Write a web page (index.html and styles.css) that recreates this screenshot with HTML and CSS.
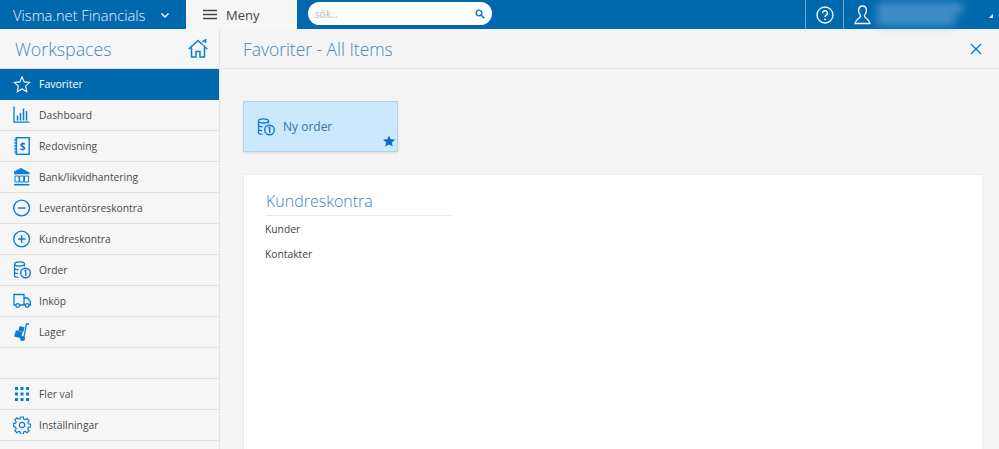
FILE: index.html
```html
<!DOCTYPE html>
<html lang="sv">
<head>
<meta charset="utf-8">
<title>Visma.net Financials</title>
<link rel="stylesheet" href="styles.css">
</head>
<body>
<header class="topbar">
  <div class="brand"><span>Visma.net Financials</span>
    <svg class="chev" width="10" height="7" viewBox="0 0 10 7"><path d="M1.500 1.500 5 5l3.500-3.500" fill="none" stroke="#fff" stroke-width="1.500"/></svg>
  </div>
  <div class="menu-tab">
    <svg width="14" height="11" viewBox="0 0 14 11"><path d="M0 1.500h14M0 5.500h14M0 9.500h14" stroke="#444" stroke-width="1.500"/></svg>
    <span>Meny</span>
  </div>
  <div class="search"><span class="ph">sök...</span>
    <svg width="10" height="10" viewBox="0 0 10 10"><circle cx="4" cy="4" r="2.900" fill="none" stroke="#0a74c4" stroke-width="1.400"/><path d="M6 6l3.300 3.300" stroke="#0a74c4" stroke-width="1.600"/></svg>
  </div>
  <div class="spacer"></div>
  <div class="help">
    <svg width="18" height="18" viewBox="0 0 18 18"><circle cx="9" cy="9" r="8" fill="none" stroke="#fff" stroke-width="1.300"/><path d="M6.600 7.200a2.400 2.400 0 1 1 3.600 2c-.8.500-1.200.9-1.200 1.800" fill="none" stroke="#fff" stroke-width="1.400"/><circle cx="9" cy="13.300" r=".9" fill="#fff"/></svg>
  </div>
  <div class="user">
    <svg width="17" height="20" viewBox="0 0 17 20"><path d="M8.500 1C5.900 1 4.600 3 4.600 5.500c0 2 .7 3.600 1.800 4.600v1.800C5 13.500 1.500 14.600 1 18.500h15c-.5-3.900-4-5-5.400-6.600v-1.800c1.100-1 1.800-2.600 1.800-4.600C12.400 3 11.100 1 8.500 1z" fill="none" stroke="#fff" stroke-width="1.300"/></svg>
    <div class="blur"><i class="b1"></i><i class="b2"></i></div>
    <svg class="corner" width="4" height="4" viewBox="0 0 4 4"><path d="M0 4 4 0v4z" fill="#fff"/></svg>
  </div>
</header>
<div class="body">
  <aside class="sidebar">
    <div class="ws-head"><span>Workspaces</span>
      <svg width="20" height="19" viewBox="0 0 20 19"><path d="M.8 10 10 1.500l4.700 4.300M19.200 10l-4-3.700M3.500 8.500V18h4.500v-5.500h4V18h4.500V8.500M14.500 2.800 17.500 .8V4" fill="none" stroke="#0a7dd1" stroke-width="1.500"/></svg>
    </div>
    <nav>
      <a class="row active"><span class="ico"><svg width="19" height="19" viewBox="0 0 20 20"><path d="M10 1.500l2.500 5.600 6 .7-4.500 4.100 1.300 6L10 14.900l-5.300 3 1.300-6L1.500 7.800l6-.7z" fill="none" stroke="#fff" stroke-width="1.200"/></svg></span>Favoriter</a>
      <a class="row"><span class="ico"><svg width="18" height="18" viewBox="0 0 18 18"><path d="M1 .5v15.700h15.500" fill="none" stroke="#0a7dd1" stroke-width="1.300"/><path d="M4.500 14.500V9.500M7.500 14.500V7M10.500 14.500V2.500M13.500 14.500V5" stroke="#0a7dd1" stroke-width="1.500"/></svg></span>Dashboard</a>
      <a class="row"><span class="ico"><svg width="18" height="18" viewBox="0 0 18 18"><rect x="3.200" y=".7" width="13" height="16.600" fill="none" stroke="#0a7dd1" stroke-width="1.400"/><path d="M1 3h3.500M1 6h3.500M1 9h3.500M1 12h3.500M1 15h3.500" stroke="#0a7dd1" stroke-width="1.200"/><text x="6.800" y="12.500" class="dollar">$</text></svg></span>Redovisning</a>
      <a class="row"><span class="ico"><svg width="18" height="18" viewBox="0 0 18 18"><path d="M8.700 .5 16.500 4.500v1.800H1V4.500z" fill="#0a7dd1"/><path d="M1 3.800 8.700 0" stroke="#0a7dd1"/><path d="M2 8h4v6H2zM6.700 8h4v6h-4zM11.500 8h4v6h-4z" fill="none" stroke="#0a7dd1" stroke-width="1"/><path d="M1 16.700h15.500" stroke="#0a7dd1" stroke-width="1.600"/></svg></span>Bank/likvidhantering</a>
      <a class="row"><span class="ico"><svg width="18" height="18" viewBox="0 0 18 18"><circle cx="8.600" cy="9" r="7.900" fill="none" stroke="#0a7dd1" stroke-width="1.400"/><path d="M5 9h7.500" stroke="#0a7dd1" stroke-width="1.500"/></svg></span>Leverantörsreskontra</a>
      <a class="row"><span class="ico"><svg width="18" height="18" viewBox="0 0 18 18"><circle cx="8.600" cy="9" r="7.900" fill="none" stroke="#0a7dd1" stroke-width="1.400"/><path d="M5 9h7.500M8.600 5.200v7.600" stroke="#0a7dd1" stroke-width="1.500"/></svg></span>Kundreskontra</a>
      <a class="row"><span class="ico"><svg width="18" height="18" viewBox="0 0 18 18"><use href="#order"/></svg></span>Order</a>
      <a class="row"><span class="ico"><svg width="18" height="16" viewBox="0 0 18 16"><path d="M3 12H1V1.500h10V12H6.500M11 5h3.500l2.800 3.500V12h-1.500M11 12h1.500" fill="none" stroke="#0a7dd1" stroke-width="1.300"/><circle cx="4.700" cy="12.500" r="1.800" fill="none" stroke="#0a7dd1" stroke-width="1.300"/><circle cx="14.300" cy="12.500" r="1.800" fill="none" stroke="#0a7dd1" stroke-width="1.300"/></svg></span>Inköp</a>
      <a class="row"><span class="ico"><svg width="16" height="19" viewBox="0 0 16 19"><path d="M15 1h-2.500L10 14" fill="none" stroke="#0a7dd1" stroke-width="1.300"/><rect x="5" y="3.500" width="5" height="5" fill="#0a7dd1" transform="rotate(15 7.500 6)"/><rect x="1" y="8" width="7" height="6.500" fill="#0a7dd1" transform="rotate(15 4.500 11)"/><circle cx="8.500" cy="15.500" r="2.500" fill="#0a7dd1"/></svg></span>Lager</a>
      <div class="row gap"></div>
      <a class="row"><span class="ico"><svg width="14" height="14" viewBox="0 0 14 14"><path d="M0 0h3v3H0zM5.500 0h3v3h-3zM11 0h3v3h-3zM0 5.500h3v3H0zM5.500 5.500h3v3h-3zM11 5.500h3v3h-3zM0 11h3v3H0zM5.500 11h3v3h-3zM11 11h3v3h-3z" fill="#0a7dd1"/></svg></span>Fler val</a>
      <a class="row"><span class="ico"><svg width="18" height="18" viewBox="0 0 18 18"><circle cx="9" cy="9" r="2.700" fill="none" stroke="#0a7dd1" stroke-width="1.200"/><path d="M7.600 1h2.800l.4 2.200 1.400.6 1.900-1.300 2 2-1.300 1.900.6 1.400 2.100.4v2.800l-2.100.4-.6 1.400 1.300 1.900-2 2-1.900-1.300-1.400.6-.4 2.100H7.600l-.4-2.100-1.400-.6-1.900 1.300-2-2 1.300-1.900-.6-1.400L.5 10.400V7.600l2.100-.4.6-1.400L1.900 3.900l2-2 1.900 1.300 1.400-.6z" fill="none" stroke="#0a7dd1" stroke-width="1.200"/></svg></span>Inställningar</a>
    </nav>
  </aside>
  <main class="main">
    <div class="page-head"><h1>Favoriter - All Items</h1>
      <svg width="12" height="12" viewBox="0 0 12 12"><path d="M1 1l10 10M11 1 1 11" stroke="#0a7dd1" stroke-width="1.400"/></svg>
    </div>
    <div class="content">
      <div class="tile">
        <svg width="18" height="18" viewBox="0 0 18 18"><defs><g id="order"><path d="M1.500 3c0-1.300 2.500-2.200 5-2.200s5 .9 5 2.200v2.500M1.500 3c0 1.300 2.500 2 5 2s5-.7 5-2M1.500 3v12c0 .7 2 1.300 4 1.400M1.500 7c0 1 1.800 1.700 4 1.900M1.500 11c0 .9 1.500 1.500 3.500 1.700" fill="none" stroke="#0a7dd1" stroke-width="1.300"/><circle cx="12.500" cy="12" r="4.800" fill="none" stroke="#0a7dd1" stroke-width="1.400"/><path d="M11.500 10.200l1.200-.8V15" fill="none" stroke="#0a7dd1" stroke-width="1.400"/></g></defs><use href="#order"/></svg>
        <span>Ny order</span>
        <svg class="star" width="12" height="12" viewBox="0 0 13 12"><path d="M6.500 0l1.900 4 4.600.5-3.400 3 .9 4.500-4-2.300-4 2.300.9-4.500-3.400-3L4.600 4z" fill="#0a6fc2"/></svg>
      </div>
      <section class="card">
        <h2>Kundreskontra</h2>
        <a class="link">Kunder</a>
        <a class="link">Kontakter</a>
      </section>
    </div>
  </main>
</div>
</body>
</html>
```

FILE: styles.css
```css
* { box-sizing: border-box; }
html, body { margin: 0; height: 100%; overflow: hidden; }
body { font-family: "Open Sans", sans-serif; background: #f4f4f4; color: #444; display: flex; flex-direction: column; }
.topbar { height: 29px; flex: none; background: #0069ae; display: flex; align-items: stretch; color: #fff; }
.brand { width: 186px; display: flex; align-items: center; padding-left: 13px; font-size: 14.700px; font-weight: 300; color: #e8f2fa; }
.brand span { width: 147px; }
.chev { display: block; margin-top: 1px; }
.menu-tab { width: 111px; background: #f6f6f6; display: flex; align-items: center; padding-left: 17px; gap: 9px; font-size: 13px; color: #444; }
.search { width: 184px; height: 23px; margin: 2px 0 0 11px; background: #fff; border-radius: 12px; display: flex; align-items: center; justify-content: space-between; padding: 0 7px 0 7px; }
.ph { font-size: 10.500px; font-style: italic; color: #b5b5b5; }
.spacer { flex: 1; }
.help { width: 39px; border-left: 1px solid #6ea8d2; border-right: 1px solid #6ea8d2; display: flex; align-items: center; justify-content: center; }
.user { width: 155px; position: relative; display: flex; align-items: center; padding-left: 10px; gap: 6px; }
.blur { width: 90px; height: 24px; display: flex; flex-direction: column; gap: 2px; filter: blur(4px); }
.blur i { display: block; height: 10px; background: #4a94ca; }
.blur .b1 { width: 86px; }
.blur .b2 { width: 78px; }
.corner { position: absolute; right: 6px; bottom: 11px; }
.body { flex: 1; display: flex; min-height: 0; }
.sidebar { width: 220px; flex: none; background: #f6f6f6; border-right: 1px solid #e3e3e3; }
.ws-head { height: 40px; display: flex; align-items: center; justify-content: space-between; padding: 0 11px 0 15px; font-size: 17.800px; font-weight: 300; color: #4b87b6; border-bottom: 1px solid #ddd; }
.row { height: 31px; display: flex; align-items: center; padding: 0 0 0 13px; font-size: 10.300px; color: #4a4a4a; border-bottom: 1px solid #e0e0e0; }
.row.gap { display: block; }
.row.active { background: #0069ae; color: #fff; font-size: 10.500px; border-bottom-color: #0069ae; }
.ico { width: 18px; display: flex; justify-content: center; margin: 0 8px 0 0; flex: none; }
.dollar { font-family: "Open Sans", sans-serif; font-size: 10px; font-weight: 700; fill: #0a7dd1; }
.main { flex: 1; min-width: 0; display: flex; flex-direction: column; }
.page-head { height: 40px; flex: none; display: flex; align-items: center; justify-content: space-between; padding: 0 17px 0 23px; border-bottom: 1px solid #e3e3e3; }
h1 { margin: 0; font-size: 17.400px; font-weight: 300; color: #4b87b6; }
.content { flex: 1; min-height: 0; padding: 32px 16px 0 23px; display: flex; flex-direction: column; gap: 22px; }
.tile { width: 155px; height: 51px; flex: none; background: #cce8fd; border: 1px solid #a6d6f6; box-shadow: 0 1px 2px rgba(0,0,0,.1); display: flex; align-items: center; padding: 0 0 0 13px; gap: 8px; font-size: 12px; color: #36749f; position: relative; }
.star { position: absolute; right: 2px; bottom: 4px; }
.card { flex: 1; background: #fff; border: 1px solid #ececec; border-bottom: 0; padding: 16px 22px 0; }
h2 { margin: 0 0 1px; width: 185px; height: 25px; font-size: 16px; font-weight: 300; color: #3e84ba; border-bottom: 1px solid #e8e8e8; line-height: 21px; }
.link { display: block; font-size: 10.300px; color: #444; height: 25px; line-height: 25px; margin-left: -1px; }
```
